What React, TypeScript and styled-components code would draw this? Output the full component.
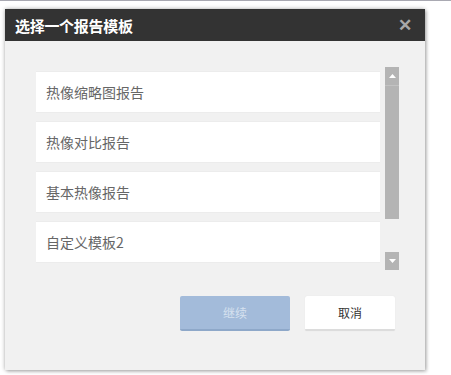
import React from "react";
import styled, { createGlobalStyle } from "styled-components";

const Global = createGlobalStyle`
  html, body { margin: 0; padding: 0; background: #ffffff; }
  body { font-family: "Noto Sans CJK SC", "Noto Sans", "Liberation Sans", sans-serif; }
`;

const Page = styled.div`
  width: 451px;
  height: 375px;
  box-sizing: border-box;
  border-top: 1px solid #a9a9b2;
  padding: 8px 0 0 5px;
`;

const Dialog = styled.div`
  width: 420px;
  height: 361px;
  background: #f1f1f1;
  box-shadow: 0 0 4px rgba(0, 0, 0, 0.35), 2px 2px 3px rgba(0, 0, 0, 0.15);
  display: flex;
  flex-direction: column;
`;

const Header = styled.div`
  height: 32px;
  background: #333333;
  display: flex;
  align-items: center;
  justify-content: space-between;
  padding: 0 13px 0 10px;
`;

const Title = styled.div`
  color: #ffffff;
  font-size: 15px;
  font-weight: 700;
  letter-spacing: -0.3px;
`;

const Close = styled.div`
  color: #a8a8a8;
  font-family: "Liberation Sans", sans-serif;
  font-size: 17px;
  font-weight: 700;
  line-height: 1;
`;

const Body = styled.div`
  padding: 26px 26px 0 31px;
  display: flex;
  flex-direction: column;
`;

const ListArea = styled.div`
  height: 203px;
  display: flex;
  gap: 5px;
`;

const List = styled.div`
  width: 344px;
  height: 203px;
  overflow: hidden;
  box-sizing: border-box;
  padding-top: 5px;
  display: flex;
  flex-direction: column;
  gap: 10px;
`;

const Item = styled.div`
  flex: 0 0 40px;
  background: #ffffff;
  box-shadow: 0 0 1px rgba(0, 0, 0, 0.12);
  display: flex;
  align-items: center;
  padding-left: 10px;
  color: #666666;
  font-size: 14px;
`;

const Scrollbar = styled.div`
  width: 14px;
  display: flex;
  flex-direction: column;
`;

const ScrollBtn = styled.div`
  height: 18px;
  background: #b4b4b4;
  display: flex;
  align-items: center;
  justify-content: center;
`;

const Track = styled.div`
  flex: 1;
  display: flex;
  flex-direction: column;
`;

const Thumb = styled.div`
  height: 133px;
  background: #b4b4b4;
  border-top: 1px solid #c2c2c2;
`;

const Arrow = ({ down }: { down?: boolean }) => (
  <svg width="7" height="4" viewBox="0 0 7 4">
    {down ? <polygon points="0,0 7,0 3.5,4" fill="#fff" /> : <polygon points="0,4 7,4 3.5,0" fill="#fff" />}
  </svg>
);

const Actions = styled.div`
  margin-top: 26px;
  padding-right: 4px;
  display: flex;
  justify-content: flex-end;
  gap: 15px;
`;

const Button = styled.div<{ $primary?: boolean }>`
  height: 35px;
  width: ${(p) => (p.$primary ? "110px" : "90px")};
  box-sizing: border-box;
  border-radius: 2px;
  display: flex;
  align-items: center;
  justify-content: center;
  font-size: 12px;
  background: ${(p) => (p.$primary ? "#a3bbda" : "#ffffff")};
  color: ${(p) => (p.$primary ? "#d6e1ef" : "#333333")};
  border-bottom: 2px solid ${(p) => (p.$primary ? "#8ea8c9" : "#dcdcdc")};
  box-shadow: ${(p) => (p.$primary ? "none" : "0 0 1px rgba(0,0,0,0.1)")};
`;

const items = ["热像缩略图报告", "热像对比报告", "基本热像报告", "自定义模板2"];

export default function App() {
  return (
    <>
      <Global />
      <Page>
        <Dialog>
          <Header>
            <Title>选择一个报告模板</Title>
            <Close>✕</Close>
          </Header>
          <Body>
            <ListArea>
              <List>
                {items.map((t) => (
                  <Item key={t}>{t}</Item>
                ))}
              </List>
              <Scrollbar>
                <ScrollBtn>
                  <Arrow />
                </ScrollBtn>
                <Track>
                  <Thumb />
                </Track>
                <ScrollBtn>
                  <Arrow down />
                </ScrollBtn>
              </Scrollbar>
            </ListArea>
            <Actions>
              <Button $primary>继续</Button>
              <Button>取消</Button>
            </Actions>
          </Body>
        </Dialog>
      </Page>
    </>
  );
}
